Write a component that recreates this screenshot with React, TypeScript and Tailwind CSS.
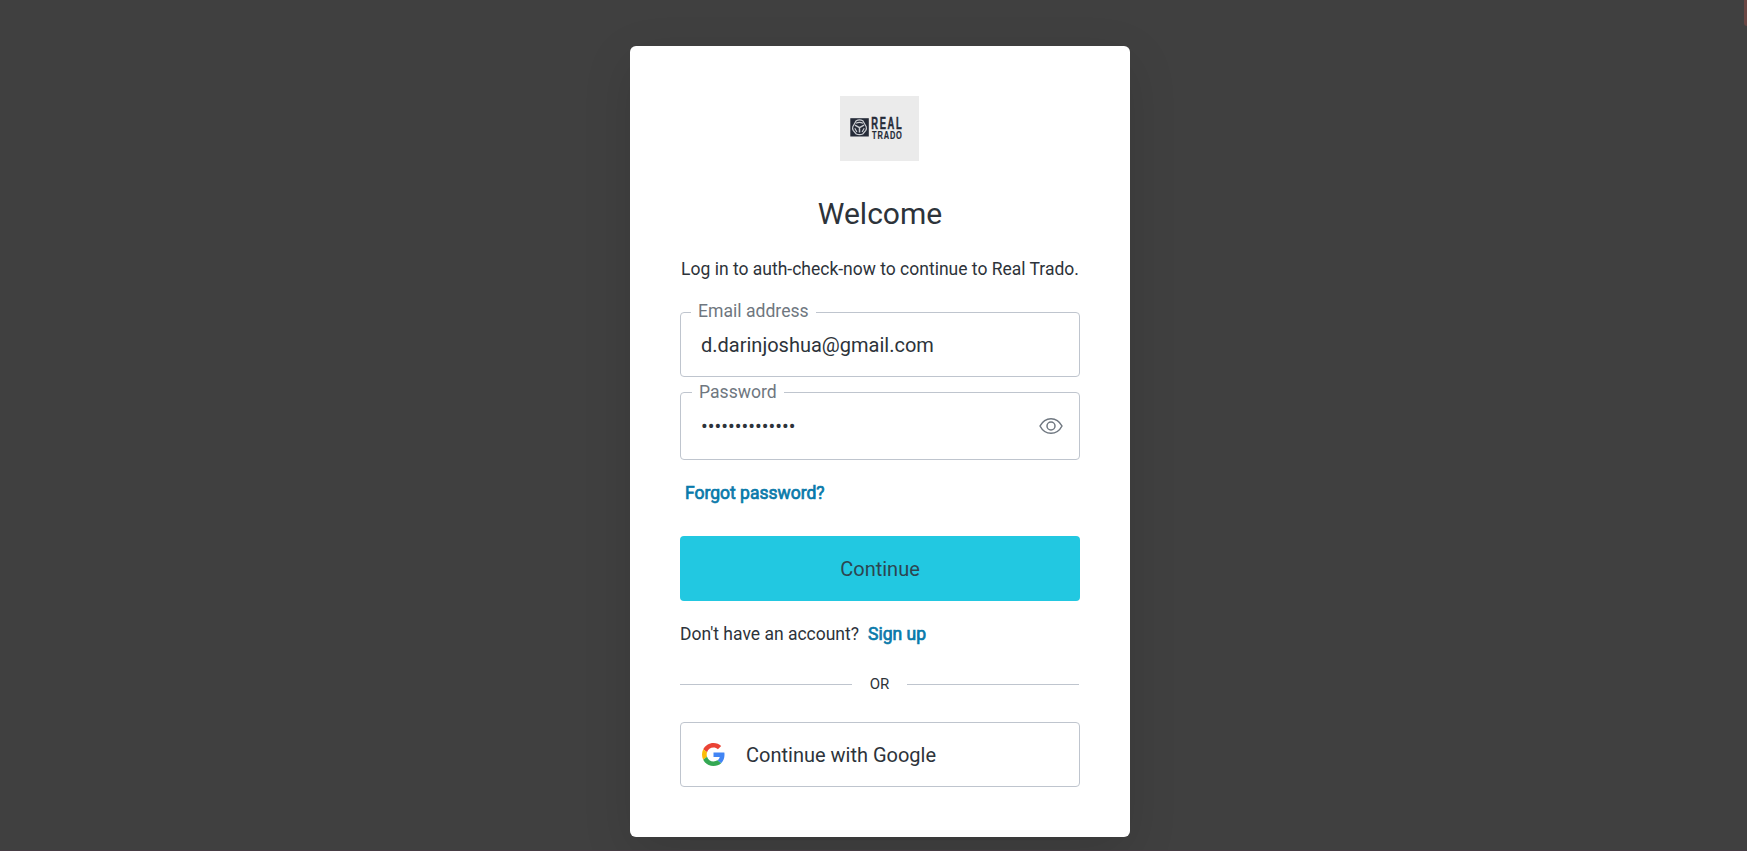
import { useState } from "react";

function BrandLogo() {
  return (
    <svg className="mr-px" width="79" height="65" viewBox="0 0 79 65" role="img" aria-label="Real Trado">
      <rect width="79" height="65" fill="#ebebeb" />
      <rect x="10.3" y="22.2" width="18.5" height="18.3" fill="#252b38" />
      <g fill="none" stroke="#c9ccd1" strokeWidth="1.2">
        <path d="M16.2 24.8 Q19.5 22.8 22.8 24.8 L26.2 30.8 Q26.8 32.6 25.8 34.4 L22.8 38 Q19.5 39.4 16.2 38 L13.2 34.4 Q12.2 32.6 12.8 30.8 Z" />
        <path d="M15 29.2 L19.5 31.6 L24 29.2 M19.5 31.6 V36.4" strokeWidth="1.5" />
        <path d="M16 27.3 Q19.5 25.4 23 27.3 M14.8 32.3 L16.9 36 M24.2 32.3 L22.1 36" />
      </g>
      <g fill="#252b38" fontFamily="'Liberation Sans', sans-serif" fontWeight="700">
        <text transform="translate(31.2 32.5) scale(0.57 1)" fontSize="16.4" letterSpacing="3" stroke="#252b38" strokeWidth="0.5">REAL</text>
        <text transform="translate(32.1 42.5) scale(0.69 1)" fontSize="10.8" letterSpacing="1.2" stroke="#252b38" strokeWidth="0.2">TRADO</text>
      </g>
    </svg>
  );
}

function EyeIcon() {
  return (
    <svg width="24" height="18" viewBox="0 0 24 18" fill="none" stroke="#6f7780" strokeWidth="1.5">
      <path d="M1 9 C6.2 -0.8 17.8 -0.8 23 9 C17.8 18.8 6.2 18.8 1 9 Z" strokeLinejoin="round" />
      <circle cx="12" cy="9" r="4" />
    </svg>
  );
}

function GoogleIcon() {
  return (
    <svg width="23" height="23" viewBox="0 0 48 48">
      <path fill="#EA4335" d="M24 9.5c3.54 0 6.71 1.22 9.21 3.6l6.85-6.85C35.9 2.38 30.47 0 24 0 14.62 0 6.51 5.38 2.56 13.22l7.98 6.19C12.43 13.72 17.74 9.5 24 9.5z" />
      <path fill="#4285F4" d="M46.98 24.55c0-1.57-.15-3.09-.38-4.55H24v9.02h12.94c-.58 2.96-2.26 5.48-4.78 7.18l7.73 6c4.51-4.18 7.09-10.36 7.09-17.65z" />
      <path fill="#FBBC05" d="M10.53 28.59c-.48-1.45-.76-2.99-.76-4.59s.27-3.14.76-4.59l-7.98-6.19C.92 16.46 0 20.12 0 24c0 3.88.92 7.54 2.56 10.78l7.97-6.19z" />
      <path fill="#34A853" d="M24 48c6.48 0 11.93-2.13 15.89-5.81l-7.73-6c-2.15 1.45-4.92 2.3-8.16 2.3-6.26 0-11.57-4.22-13.47-9.91l-7.98 6.19C6.51 42.62 14.62 48 24 48z" />
    </svg>
  );
}

export default function App() {
  const [email, setEmail] = useState("d.darinjoshua@gmail.com");
  const [password, setPassword] = useState("passwordsecret");
  const [visible, setVisible] = useState(false);

  return (
    <div className="relative flex h-[851px] w-full justify-center overflow-hidden border-b border-[#463d44] bg-[#404040] pt-[46px] font-[Roboto,sans-serif] text-[17.5px] text-[#2d333a]">
      <div className="absolute top-0 right-0 h-[26px] w-[3px] rounded-bl-[3px] bg-[#694643]" />
      <main className="ml-[13px] flex h-[791px] w-[500px] flex-col rounded-[6px] bg-white px-[50px] pt-[50px] shadow-[0_15px_50px_rgba(0,0,0,0.12)]">
        <header className="flex flex-col items-center">
          <BrandLogo />
          <h1 className="mt-[31px] text-[30px] leading-[44px]">Welcome</h1>
          <p className="mt-5 leading-[26px] whitespace-nowrap">Log in to auth-check-now to continue to Real Trado.</p>
        </header>

        <form className="mt-[30px] flex flex-col" onSubmit={(e) => e.preventDefault()}>
          <div className="relative h-[65px] rounded-[4px] border border-[#bfc5ce]">
            <label htmlFor="email" className="absolute -top-[14px] left-[10px] bg-white px-[7px] text-[17.6px] leading-6 text-[#6f7780]">Email address</label>
            <input id="email" className="h-full w-full bg-transparent px-5 text-[20px] outline-none" value={email} onChange={(e) => setEmail(e.target.value)} />
          </div>
          <div className="relative mt-[15px] flex h-[68px] items-center rounded-[4px] border border-[#bfc5ce] pr-4">
            <label htmlFor="password" className="absolute -top-[13px] left-[11px] bg-white px-[7px] text-[17.6px] leading-6 text-[#6f7780]">Password</label>
            <input id="password" type={visible ? "text" : "password"} className="h-full min-w-0 flex-1 bg-transparent pl-5 text-[20px] outline-none" value={password} onChange={(e) => setPassword(e.target.value)} />
            <button type="button" aria-label="Show password" onClick={() => setVisible(!visible)}><EyeIcon /></button>
          </div>
          <a href="#" className="mt-5 ml-[5px] self-start leading-[26px] text-[#0a7aaa] [-webkit-text-stroke:0.7px_#0a7aaa]">Forgot password?</a>
          <button type="submit" className="mt-[30px] h-[65px] rounded-[4px] bg-[#22c8e1] text-[20px] text-[#2d4550]">Continue</button>
        </form>

        <p className="mt-5 leading-[26px]">
          Don't have an account?
          <a href="#" className="ml-[9px] text-[#0a7aaa] [-webkit-text-stroke:0.7px_#0a7aaa]">Sign up</a>
        </p>

        <div className="mt-[26px] flex h-[22px] w-[399px] items-center text-[15px]">
          <span className="h-px flex-1 bg-[#bfc5ce]" />
          <span className="w-[55px] text-center">OR</span>
          <span className="h-px flex-1 bg-[#bfc5ce]" />
        </div>

        <button type="button" className="mt-[27px] flex h-[65px] items-center rounded-[4px] border border-[#bfc5ce] pl-[21px] text-[20px]">
          <GoogleIcon />
          <span className="ml-[21px]">Continue with Google</span>
        </button>
      </main>
    </div>
  );
}
